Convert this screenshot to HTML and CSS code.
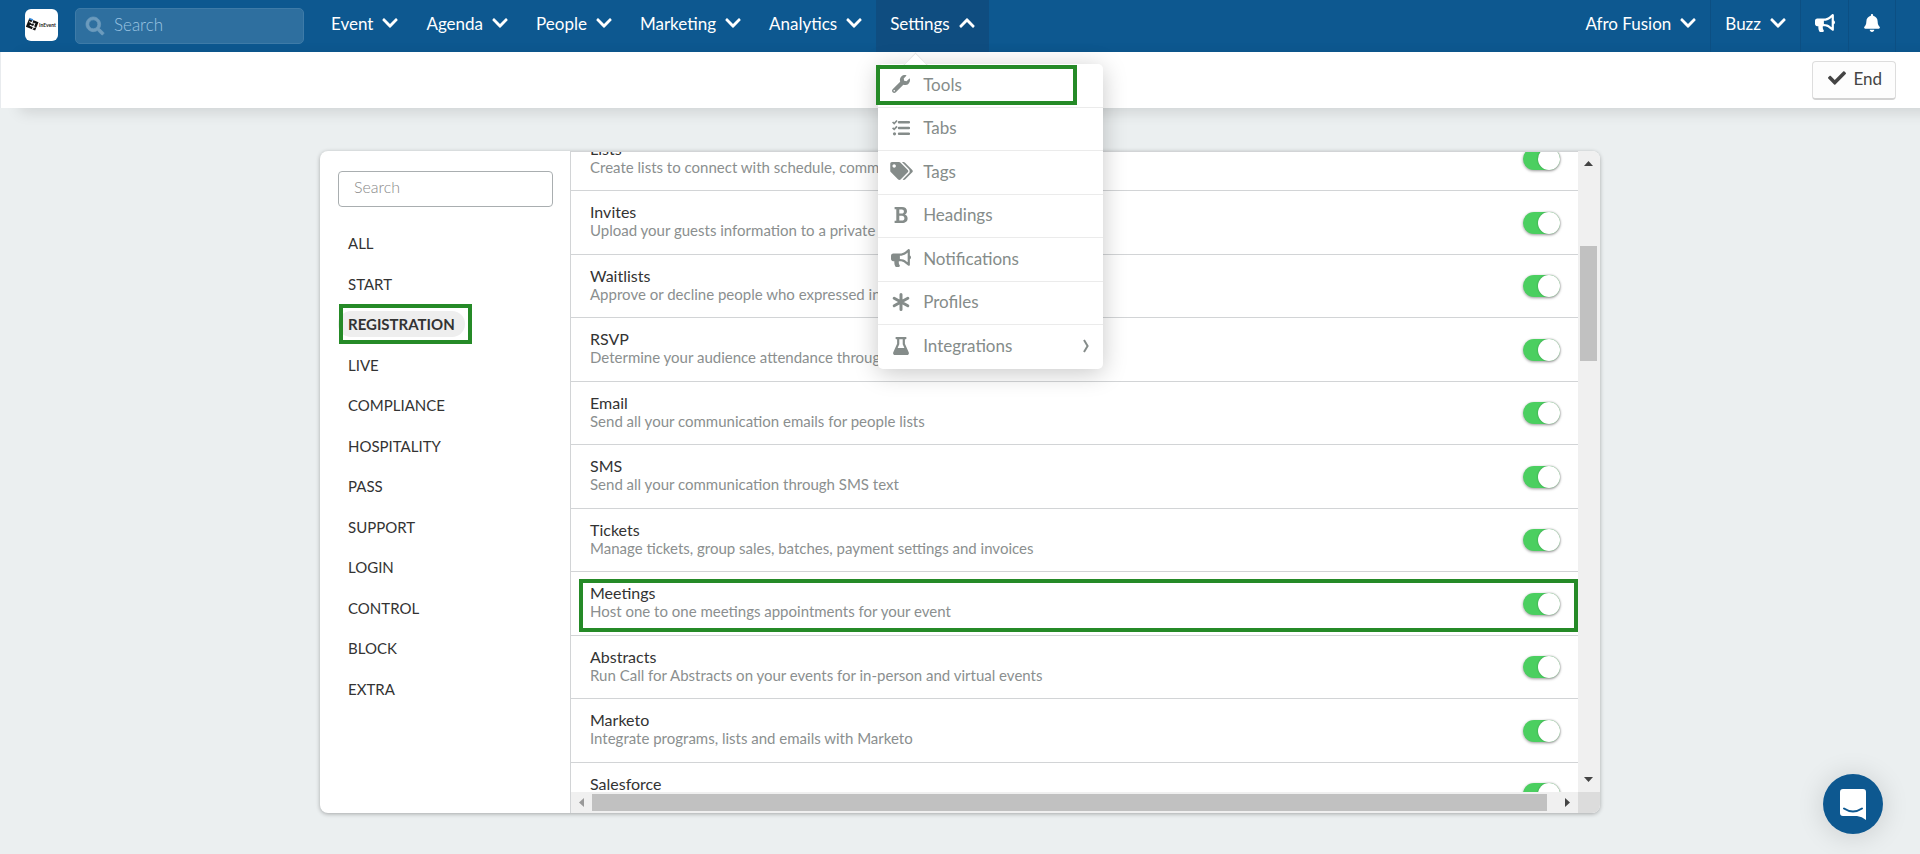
FILE: index.html
```html
<!DOCTYPE html>
<html lang="en">
<head>
<meta charset="utf-8">
<title>Event tools</title>
<link rel="stylesheet" href="styles.css">
</head>
<body>
<svg class="sprite" aria-hidden="true">
  <symbol id="down" viewBox="0 0 448 512"><path d="M207.029 381.476L12.686 187.132c-9.373-9.373-9.373-24.569 0-33.941l22.667-22.667c9.357-9.357 24.522-9.375 33.901-.04L224 284.505l154.745-154.021c9.379-9.335 24.544-9.317 33.901.04l22.667 22.667c9.373 9.373 9.373 24.569 0 33.941L240.971 381.476c-9.373 9.372-24.569 9.372-33.942 0z"/></symbol>
  <symbol id="up" viewBox="0 0 448 512"><path transform="rotate(180 224 256)" d="M207.029 381.476L12.686 187.132c-9.373-9.373-9.373-24.569 0-33.941l22.667-22.667c9.357-9.357 24.522-9.375 33.901-.04L224 284.505l154.745-154.021c9.379-9.335 24.544-9.317 33.901.04l22.667 22.667c9.373 9.373 9.373 24.569 0 33.941L240.971 381.476c-9.373 9.372-24.569 9.372-33.942 0z"/></symbol>
  <symbol id="bullhorn" viewBox="0 0 576 512"><path d="M576 240c0-23.63-12.95-44.04-32-55.12V32.01C544 23.26 537.02 0 512 0c-7.12 0-14.19 2.38-19.98 7.02l-85.03 68.03C364.28 109.19 310.66 128 256 128H64c-35.35 0-64 28.65-64 64v96c0 35.35 28.65 64 64 64h33.7c-1.39 10.48-2.18 21.14-2.18 32 0 39.77 9.26 77.35 25.56 110.94 5.19 10.69 16.52 17.06 28.4 17.06h74.28c26.05 0 41.69-29.84 25.9-50.56-16.4-21.52-26.15-48.36-26.15-77.44 0-11.11 1.62-21.79 4.41-32H256c54.66 0 108.28 18.81 150.98 52.95l85.03 68.03a32.023 32.023 0 0 0 19.98 7.02c24.92 0 32-22.78 32-32V295.13C563.05 284.04 576 263.63 576 240zm-96 141.42l-33.05-26.44C392.95 311.78 325.12 288 256 288v-96c69.12 0 136.95-23.78 190.95-66.98L480 98.58v282.84z"/></symbol>
</svg>

<header class="topbar">
  <a class="logo" href="#" aria-label="InEvent">
    <svg viewBox="0 0 33 32" width="33" height="32">
      <g transform="rotate(22 7 16)"><rect x="2" y="11" width="10" height="9" fill="#111"/><path d="M3 14h5M5 17h6M6 11v4M9 13v7" stroke="#fff" stroke-width="1"/><path d="M2 11h4" stroke="#3b8ede" stroke-width="1.5"/></g>
      <text class="logo-text" x="14" y="18">InEvent</text>
    </svg>
  </a>
  <div class="global-search">
    <svg class="search-icon" viewBox="0 0 512 512" aria-hidden="true"><path stroke="currentColor" stroke-width="20" d="M505 442.7L405.3 343c-4.5-4.5-10.6-7-17-7H372c27.6-35.3 44-79.7 44-128C416 93.1 322.9 0 208 0S0 93.1 0 208s93.1 208 208 208c48.3 0 92.7-16.4 128-44v16.3c0 6.4 2.5 12.5 7 17l99.7 99.7c9.4 9.4 24.6 9.4 33.9 0l28.3-28.3c9.4-9.4 9.4-24.6.1-34zM208 336c-70.7 0-128-57.2-128-128 0-70.7 57.2-128 128-128 70.7 0 128 57.2 128 128 0 70.7-57.2 128-128 128z"/></svg>
    <input type="text" placeholder="Search" aria-label="Search the platform">
  </div>
  <nav class="main-nav">
    <button class="nav-item">Event<svg class="chev"><use href="#down"/></svg></button>
    <button class="nav-item">Agenda<svg class="chev"><use href="#down"/></svg></button>
    <button class="nav-item">People<svg class="chev"><use href="#down"/></svg></button>
    <button class="nav-item">Marketing<svg class="chev"><use href="#down"/></svg></button>
    <button class="nav-item">Analytics<svg class="chev"><use href="#down"/></svg></button>
    <div class="nav-drop">
      <button class="nav-item open" aria-expanded="true">Settings<svg class="chev"><use href="#up"/></svg></button>
      <div class="menu">
        <a class="menu-item marked" href="#"><span class="menu-icon"><svg width="18" height="18" viewBox="0 0 512 512"><path d="M507.73 109.1c-2.24-9.03-13.54-12.09-20.12-5.51l-74.36 74.36-67.88-11.31-11.31-67.88 74.36-74.36c6.62-6.62 3.43-17.9-5.66-20.16-47.38-11.74-99.55.91-136.58 37.93-39.64 39.64-50.55 97.1-34.05 147.2L18.74 402.76c-24.99 24.99-24.99 65.51 0 90.5 24.99 24.99 65.51 24.99 90.5 0l213.21-213.21c50.12 16.71 107.47 5.68 147.37-34.22 37.07-37.07 49.7-89.32 37.91-136.73zM64 472c-13.25 0-24-10.75-24-24 0-13.26 10.75-24 24-24s24 10.74 24 24c0 13.25-10.75 24-24 24z"/></svg></span>Tools</a>
        <a class="menu-item" href="#"><span class="menu-icon"><svg width="18" height="18" viewBox="0 0 18 18"><path d="M7 3.2h10M7 9h10M7 14.8h10" stroke="currentColor" stroke-width="2.4" fill="none" stroke-linecap="round"/><path d="M.6 3l1.600 1.500L5 1.500M.6 8.800l1.600 1.500L5 7.300" stroke="currentColor" stroke-width="1.700" fill="none"/><circle cx="2.500" cy="14.800" r="1.600"/></svg></span>Tabs</a>
        <a class="menu-item" href="#"><span class="menu-icon"><svg width="23" height="18" viewBox="0 0 640 512"><path d="M497.941 225.941L286.059 14.059A48 48 0 0 0 252.118 0H48C21.49 0 0 21.49 0 48v204.118a48 48 0 0 0 14.059 33.941l211.882 211.882c18.744 18.745 49.136 18.746 67.882 0l204.118-204.118c18.745-18.745 18.745-49.137 0-67.882zM112 160c-26.51 0-48-21.49-48-48s21.49-48 48-48 48 21.49 48 48-21.49 48-48 48zm513.941 133.823L421.823 497.941c-18.745 18.745-49.137 18.745-67.882 0l-.36-.36L527.64 323.522c16.999-16.999 26.36-39.600 26.36-63.640s-9.362-46.641-26.360-63.640L331.397 0h48.721a48 48 0 0 1 33.941 14.059l211.882 211.882c18.745 18.745 18.745 49.137 0 67.882z"/></svg></span>Tags</a>
        <a class="menu-item" href="#"><span class="menu-icon"><svg width="14" height="18" viewBox="0 0 14 18"><path fill-rule="evenodd" d="M.6 1H8c3 0 5 1.500 5 4.200 0 1.600-.8 2.800-2.200 3.400 1.800.6 2.800 2 2.800 3.900 0 2.900-2.200 4.500-5.400 4.500H.6v-2.300h1.700V3.300H.6zM5.300 3.400v4.100h2.500c1.300 0 2.100-.8 2.100-2.100 0-1.200-.8-2-2.100-2zm0 6.400v4.800H8c1.500 0 2.400-.9 2.400-2.400S9.500 9.800 8 9.800z"/></svg></span>Headings</a>
        <a class="menu-item" href="#"><span class="menu-icon"><svg width="20" height="18"><use href="#bullhorn"/></svg></span>Notifications</a>
        <a class="menu-item" href="#"><span class="menu-icon"><svg width="18" height="18" viewBox="0 0 18 18"><path d="M9 1.500v15M2.200 5.200l13.600 7.600M15.800 5.200L2.200 12.800" stroke="currentColor" stroke-width="3" stroke-linecap="round"/></svg></span>Profiles</a>
        <a class="menu-item" href="#"><span class="menu-icon"><svg width="16" height="18" viewBox="0 0 16 18"><path fill-rule="evenodd" d="M3.200 0h9.600c.9 0 .9 2.200 0 2.200h-.9v4.600l3.800 8.400c.6 1.400-.2 2.800-1.700 2.800H2C.5 18-.3 16.600.3 15.200l3.800-8.400V2.200h-.9c-.9 0-.9-2.200 0-2.200zM6.300 2.200v5L4.600 11h6.800L9.700 7.200v-5z"/></svg></span>Integrations<svg class="sub" width="6" height="14" viewBox="0 0 6 14"><path d="M1 1l3.600 6L1 13" stroke="currentColor" stroke-width="2" fill="none"/></svg></a>
      </div>
    </div>
  </nav>
  <div class="account">
    <button class="nav-item">Afro Fusion<svg class="chev"><use href="#down"/></svg></button>
    <button class="nav-item divided">Buzz<svg class="chev"><use href="#down"/></svg></button>
    <button class="nav-icon" aria-label="Announcements"><svg width="20" height="18"><use href="#bullhorn"/></svg></button>
    <button class="nav-icon last" aria-label="Alerts"><svg width="16" height="18" viewBox="0 0 448 512"><path d="M224 512c35.320 0 63.970-28.650 63.970-64H160.030c0 35.350 28.650 64 63.970 64zm215.390-149.710c-19.320-20.760-55.470-51.990-55.470-154.290 0-77.700-54.480-139.900-127.940-155.160V32c0-17.670-14.320-32-31.980-32s-31.980 14.330-31.980 32v20.840C118.560 68.100 64.080 130.300 64.080 208c0 102.300-36.150 133.530-55.470 154.290-6 6.450-8.660 14.160-8.610 21.710.11 16.400 12.980 32 32.100 32h383.800c19.120 0 32-15.600 32.100-32 .05-7.550-2.610-15.270-8.610-21.710z"/></svg></button>
  </div>
</header>

<div class="actions">
  <button class="end"><svg width="18" height="18" viewBox="0 0 512 512"><path d="M173.898 439.404l-166.400-166.400c-9.997-9.997-9.997-26.206 0-36.204l36.203-36.204c9.997-9.998 26.207-9.998 36.204 0L192 312.690 432.095 72.596c9.997-9.997 26.207-9.997 36.204 0l36.203 36.204c9.997 9.997 9.997 26.206 0 36.204l-294.400 294.401c-9.998 9.997-26.207 9.997-36.204-.001z"/></svg>End</button>
</div>

<main class="panel">
  <aside class="side">
    <input class="side-search" type="text" placeholder="Search" aria-label="Search tools">
    <nav class="cats">
      <a href="#">ALL</a>
      <a href="#">START</a>
      <a href="#" class="current">REGISTRATION</a>
      <a href="#">LIVE</a>
      <a href="#">COMPLIANCE</a>
      <a href="#">HOSPITALITY</a>
      <a href="#">PASS</a>
      <a href="#">SUPPORT</a>
      <a href="#">LOGIN</a>
      <a href="#">CONTROL</a>
      <a href="#">BLOCK</a>
      <a href="#">EXTRA</a>
    </nav>
  </aside>
  <section class="content">
    <div class="view">
      <div class="tools">
        <label class="tool"><span class="tool-text"><span class="name">Lists</span><span class="desc">Create lists to connect with schedule, communication and more</span></span><input class="switch" type="checkbox" checked></label>
        <label class="tool"><span class="tool-text"><span class="name">Invites</span><span class="desc">Upload your guests information to a private list</span></span><input class="switch" type="checkbox" checked></label>
        <label class="tool"><span class="tool-text"><span class="name">Waitlists</span><span class="desc">Approve or decline people who expressed interest</span></span><input class="switch" type="checkbox" checked></label>
        <label class="tool"><span class="tool-text"><span class="name">RSVP</span><span class="desc">Determine your audience attendance through RSVP</span></span><input class="switch" type="checkbox" checked></label>
        <label class="tool"><span class="tool-text"><span class="name">Email</span><span class="desc">Send all your communication emails for people lists</span></span><input class="switch" type="checkbox" checked></label>
        <label class="tool"><span class="tool-text"><span class="name">SMS</span><span class="desc">Send all your communication through SMS text</span></span><input class="switch" type="checkbox" checked></label>
        <label class="tool"><span class="tool-text"><span class="name">Tickets</span><span class="desc">Manage tickets, group sales, batches, payment settings and invoices</span></span><input class="switch" type="checkbox" checked></label>
        <label class="tool marked"><span class="tool-text"><span class="name">Meetings</span><span class="desc">Host one to one meetings appointments for your event</span></span><input class="switch" type="checkbox" checked></label>
        <label class="tool"><span class="tool-text"><span class="name">Abstracts</span><span class="desc">Run Call for Abstracts on your events for in-person and virtual events</span></span><input class="switch" type="checkbox" checked></label>
        <label class="tool"><span class="tool-text"><span class="name">Marketo</span><span class="desc">Integrate programs, lists and emails with Marketo</span></span><input class="switch" type="checkbox" checked></label>
        <label class="tool"><span class="tool-text"><span class="name">Salesforce</span></span><input class="switch" type="checkbox" checked></label>
      </div>
    </div>
    <div class="vbar">
      <svg width="9" height="5" viewBox="0 0 9 5"><path d="M0 5L4.500 0 9 5z"/></svg>
      <div class="vtrack"><div class="vthumb"></div></div>
      <svg width="9" height="5" viewBox="0 0 9 5"><path d="M0 0h9L4.500 5z"/></svg>
    </div>
    <div class="hbar">
      <svg class="off" width="5" height="9" viewBox="0 0 5 9"><path d="M5 0v9L0 4.500z"/></svg>
      <div class="hthumb"></div>
      <svg width="5" height="9" viewBox="0 0 5 9"><path d="M0 0v9l5-4.500z"/></svg>
    </div>
    <div class="corner"></div>
  </section>
</main>

<button class="chat" aria-label="Open chat"><svg width="26" height="31" viewBox="0 0 26 31"><path d="M3 0h20q3 0 3 3v28q-4-3.500-9-4H3q-3 0-3-3V3q0-3 3-3z" fill="#fff"/><path d="M4 19.500q9 6 18 0" fill="none" stroke="#0d5890" stroke-width="2" stroke-linecap="round"/></svg></button>
</body>
</html>
```
FILE: styles.css
```css
* { box-sizing: border-box; }
body {
  margin: 0;
  min-height: 100vh;
  background: #ebeff0;
  font-family: Lato, "Liberation Sans", sans-serif;
  color: #333;
}
button, input { font-family: inherit; }
button { cursor: pointer; }
a { text-decoration: none; color: inherit; }
svg { fill: currentColor; flex: none; }
.sprite { position: absolute; width: 0; height: 0; }

/* top bar */
.topbar {
  display: flex;
  align-items: center;
  height: 52px;
  padding: 0 24px 0 25px;
  background: #0d5890;
  color: #fff;
}
.logo {
  display: block;
  width: 33px;
  height: 32px;
  margin: 0 17px 2px 0;
  background: #fff;
  border-radius: 6px;
}
.logo svg { display: block; }
.logo-text { font-size: 5px; font-weight: 700; fill: #222; }
.global-search {
  display: flex;
  align-items: center;
  gap: 10px;
  width: 229px;
  height: 36px;
  margin-right: 13px;
  padding: 0 10px;
  background: #2e6f9f;
  border: 1px solid #3e7ba8;
  border-radius: 5px;
}
.search-icon { width: 18px; height: 18px; color: #6c9bbd; overflow: visible; }
.global-search input {
  min-width: 0;
  flex: 1;
  padding: 0 0 4px;
  border: 0;
  outline: 0;
  background: none;
  color: #fff;
  font-size: 17px;
  font-weight: 300;
}
.global-search input::placeholder { color: #9cc4e2; }
.main-nav, .account { display: flex; align-self: stretch; }
.account { margin-left: auto; }
.nav-item {
  display: flex;
  align-items: center;
  gap: 9px;
  height: 52px;
  padding: 0 14px 6px;
  border: 0;
  background: none;
  color: #fff;
  font-size: 17px;
  white-space: nowrap;
}
.nav-item.open { background: #0f4d80; }
.chev { width: 16px; height: 18px; }
.divided, .nav-icon { border-left: 1px solid #0c4f83; }
.nav-icon {
  display: flex;
  align-items: center;
  justify-content: center;
  width: 48px;
  height: 52px;
  padding: 0 0 6px;
  border-width: 0 0 0 1px;
  background: none;
  color: #fff;
}
.nav-icon.last { border-right: 1px solid #0c4f83; }

/* settings menu */
.nav-drop { position: relative; }
.menu {
  position: absolute;
  z-index: 5;
  top: 64px;
  left: 2px;
  width: 225px;
  background: #fff;
  border-radius: 5px;
  box-shadow: 0 4px 24px rgba(0, 0, 0, .22);
  color: #858c8a;
}
.menu::before {
  content: "";
  position: absolute;
  top: -8px;
  left: 29px;
  width: 16px;
  height: 16px;
  background: #fff;
  border: 1px solid #e6e6e6;
  border-width: 1px 0 0 1px;
  transform: rotate(45deg);
}
.menu-item {
  position: relative;
  display: flex;
  align-items: center;
  height: 43px;
  padding: 0 14px 3px 11px;
  border-bottom: 1px solid #ebebeb;
  font-size: 17px;
}
.menu-item:nth-child(odd) { height: 44px; }
.menu-item:last-child { border-bottom: 0; }
.menu-icon { display: flex; justify-content: center; width: 24px; margin-right: 10px; }
.sub { margin-left: auto; }
.menu-item.marked::after {
  content: "";
  position: absolute;
  inset: 1px 26px 2px -2px;
  border: 4px solid #258a27;
}

/* action strip */
.actions {
  display: flex;
  justify-content: flex-end;
  align-items: center;
  height: 56px;
  padding: 0 24px 0 0;
  background: #fff;
  border-left: 1px solid #e8ebee;
  box-shadow: 20px 4px 14px rgba(0, 0, 0, .12);
}
.end {
  display: flex;
  align-items: center;
  gap: 7px;
  height: 39px;
  padding: 0 13px 3px 15px;
  background: #fdfdfd;
  border: 1px solid #ddd;
  border-bottom: 2px solid #d2d2d2;
  border-radius: 4px;
  color: #444;
  font-size: 17px;
}

/* panel */
.panel {
  display: flex;
  width: calc(100% - 48px);
  max-width: 1280px;
  height: calc(100vh - 192px);
  margin: 43px auto 0;
  overflow: hidden;
  background: #fff;
  border-radius: 8px;
  box-shadow: 0 1px 4px rgba(0, 0, 0, .3);
}
.side { width: 250px; padding: 20px 17px 0 18px; }
.side-search {
  display: block;
  width: 100%;
  height: 36px;
  padding: 0 15px 6px;
  border: 1px solid #a9aeb0;
  border-radius: 4px;
  font-size: 16px;
  font-weight: 300;
}
.side-search::placeholder { color: #888; }
.cats {
  display: flex;
  flex-direction: column;
  align-items: flex-start;
  padding-top: 16px;
  font-size: 15px;
}
.cats a {
  display: flex;
  align-items: center;
  height: 40px;
  padding: 0 10px;
}
.cats a:nth-child(even) { height: 41px; }
.cats .current {
  position: relative;
  height: 26px;
  margin: 7px 0;
  background: #eee;
  border-radius: 14px;
  font-weight: 700;
}
.current::after {
  content: "";
  position: absolute;
  inset: -7px -7px -7px 1px;
  border: 4px solid #258a27;
}
.content {
  flex: 1;
  min-width: 0;
  display: grid;
  grid-template-columns: minmax(0, 1fr) 22px;
  grid-template-rows: minmax(0, 1fr) 21px;
  border-left: 1px solid #d2d4d6;
}
.view { overflow: hidden; border-top: 1px solid #d2d4d6; }
/* list is scrolled part of the way into its first row */
.tools { margin-top: -24px; }
.tool {
  position: relative;
  display: flex;
  align-items: center;
  justify-content: space-between;
  height: 64px;
  padding: 0 18px 0 19px;
  border-bottom: 1px solid #d2d4d6;
}
.tool:nth-child(odd) { height: 63px; }
.tool-text { align-self: flex-start; padding-top: 12px; line-height: 18px; }
.name, .desc { display: block; white-space: nowrap; }
.name { font-size: 16px; }
.desc { font-size: 15px; color: #8b8f8f; }
.tool.marked::after {
  content: "";
  position: absolute;
  inset: 7px 0 3px 8px;
  border: 4px solid #258a27;
}
.switch {
  appearance: none;
  display: flex;
  justify-content: flex-end;
  width: 37px;
  height: 22px;
  margin: 0;
  background: #4bcf60;
  border-radius: 11px;
  box-shadow: 0 1px 3px rgba(0, 0, 0, .4);
}
.switch::before {
  content: "";
  width: 22px;
  height: 22px;
  background: #fff;
  border-radius: 50%;
  box-shadow: 0 0 2px rgba(0, 0, 0, .3);
}
.vbar {
  display: flex;
  flex-direction: column;
  align-items: center;
  gap: 8px;
  padding: 10px 3px 10px 2px;
  background: #f0f0f0;
  color: #444;
}
.vtrack { flex: 1; align-self: stretch; display: flex; flex-direction: column; padding-top: 72px; }
.vthumb { flex: 0 0 22%; background: #c1c1c1; }
.hbar {
  display: flex;
  align-items: center;
  gap: 8px;
  padding: 2px 8px;
  background: #f0f0f0;
  color: #444;
}
.hbar .off { color: #999; }
.hthumb { flex: 1; height: 17px; margin-right: 10px; background: #c1c1c1; }
.corner { background: #dcdcdc; }

.chat {
  position: fixed;
  right: 37px;
  bottom: 20px;
  display: flex;
  align-items: center;
  justify-content: center;
  width: 60px;
  height: 60px;
  padding: 0;
  border: 0;
  border-radius: 50%;
  background: #0d5890;
  box-shadow: 0 2px 28px rgba(0, 0, 0, .14);
}
```
